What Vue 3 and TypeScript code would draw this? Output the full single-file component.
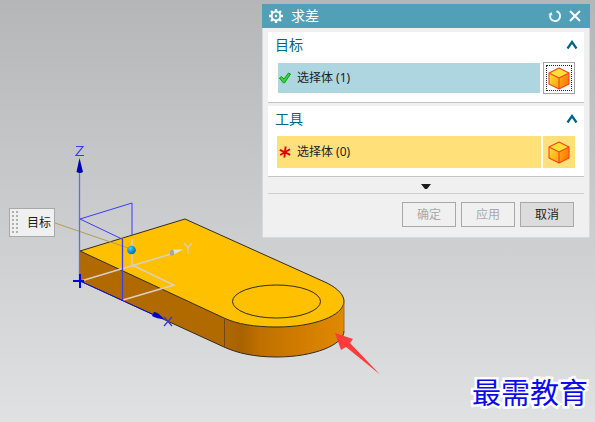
<script setup lang="ts">
import { ref } from 'vue'

interface Step {
  id: string
  title: string
  count: number
  required: boolean
  open: boolean
}

const steps = ref<Step[]>([
  { id: 'target', title: '目标', count: 1, required: false, open: true },
  { id: 'tool', title: '工具', count: 0, required: true, open: true },
])

const grip = Array.from({ length: 12 }, (_, i) => ({ x: (i % 2) * 4, y: Math.floor(i / 2) * 4 }))
</script>

<template>
  <main class="viewport">
    <svg class="scene" width="400" height="400" viewBox="0 0 400 400" aria-hidden="true">
      <defs>
        <linearGradient id="round" gradientUnits="userSpaceOnUse" x1="224" y1="0" x2="344" y2="0">
          <stop offset="0" stop-color="#b06800" />
          <stop offset="0.14" stop-color="#a86200" />
          <stop offset="0.3" stop-color="#bf7000" />
          <stop offset="0.6" stop-color="#cf7b00" />
          <stop offset="1" stop-color="#e08900" />
        </linearGradient>
        <radialGradient id="ball" cx="0.35" cy="0.3" r="0.8">
          <stop offset="0" stop-color="#5cc8ff" />
          <stop offset="0.5" stop-color="#1296dc" />
          <stop offset="1" stop-color="#075d94" />
        </radialGradient>
      </defs>
      <path d="M80 251L224 318V347L80 281Z" fill="#b16a00" />
      <path d="M224 318C237 324 254 327 277 327C313 327 344 316 344 301V331C344 345 313 357 277 357C254 357 237 353 224 347Z" fill="url(#round)" />
      <path d="M80 251L185 219L327 283C339 289 344 296 344 301C344 316 313 327 277 327C254 327 237 324 224 318Z" fill="#ffc000" />
      <g fill="none" stroke="#332b20" stroke-width="1">
        <path d="M80 251L185 219L327 283C339 289 344 296 344 301C344 316 313 327 277 327C254 327 237 324 224 318Z" />
        <path d="M80 281L224 347C237 353 254 357 277 357C313 357 344 345 344 331" />
        <ellipse cx="276.500" cy="301.500" rx="44" ry="16.500" />
        <path d="M224.500 318V347" stroke="#70481f" />
        <path d="M344 302V331" stroke="#a66a20" />
      </g>
      <path d="M55 223L131 249" stroke="#b39b5c" fill="none" />
      <g fill="none" stroke="#d9cfcc" stroke-width="1.400">
        <path d="M81 281L171 254" />
        <path d="M132 239V265L174 285L123 300" />
      </g>
      <g fill="none" stroke="#3c3cf4" stroke-width="1">
        <path d="M79.500 172V281" stroke="#6868ee" stroke-width="1.300" />
        <path d="M132 235V203L80 219L122 239" />
        <path d="M122.500 239V300" stroke-width="1.300" />
        <path d="M80 281L154 315" stroke="#1010dd" />
      </g>
      <path d="M73 281H84M80 274V288" stroke="#0000ef" stroke-width="2" />
      <path d="M79.500 158L83 172Q80 174 76.500 172Z" fill="#0000b4" />
      <path d="M152 316L154 312Q158 312 164 319Q157 319 152 316Z" fill="#0000c8" />
      <path d="M183 249.500L171 249.500Q168 253 171 256Z" fill="#e4e0da" />
      <path d="M171 249.500Q168 253 171 256L174 255Q175 252 173 249.500Z" fill="#aaa59c" />
      <g fill="none" stroke-width="1.200">
        <path d="M76 146.500H83L76 155.500H84" stroke="#3939ff" />
        <path d="M164 317L172 326M172 317L164 326" stroke="#3434d8" />
        <path d="M184 243L188 247.500L192 243M188 247.500V253" stroke="#d8d0c6" />
      </g>
      <circle cx="131.500" cy="250" r="4.300" fill="url(#ball)" />
      <path d="M335 333L353 339L350 343L380 374.500L346 347L341 350Z" fill="#ff3b3b" />
    </svg>

    <div class="tag">
      <svg width="7" height="23" viewBox="0 0 7 23" aria-hidden="true">
        <rect v-for="(dot, i) in grip" :key="i" :x="dot.x" :y="dot.y" width="2" height="2" fill="#b0b0b0" />
      </svg>
      <span>目标</span>
    </div>

    <section class="dialog" role="dialog" aria-labelledby="dialog-title">
      <header class="titlebar">
        <svg width="14" height="14" viewBox="0 0 14 14" aria-hidden="true">
          <path d="M7 0V14M0 7H14M2 2L12 12M12 2L2 12" stroke="#fff" stroke-width="2.400" />
          <circle cx="7" cy="7" r="4.300" fill="#529fb8" stroke="#fff" stroke-width="1.800" />
          <circle cx="7" cy="7" r="1.200" fill="#fff" />
        </svg>
        <h1 id="dialog-title">求差</h1>
        <button type="button" class="tool" aria-label="重置">
          <svg width="14" height="14" viewBox="0 0 14 14">
            <path d="M8.500 2.200A5 5 0 1 1 2.200 6" fill="none" stroke="#e9f5f8" stroke-width="2" />
            <path d="M0.200 5.500L3.500 3L4.500 6.500Z" fill="#e9f5f8" />
          </svg>
        </button>
        <button type="button" class="tool" aria-label="关闭">
          <svg width="14" height="14" viewBox="0 0 14 14">
            <path d="M2 2L12 12M12 2L2 12" stroke="#fff" stroke-width="2" />
          </svg>
        </button>
      </header>

      <div class="body">
        <section v-for="step in steps" :key="step.id" class="group">
          <h2>
            <button type="button" class="toggle" :aria-expanded="step.open" @click="step.open = !step.open">
              <span>{{ step.title }}</span>
              <svg width="12" height="10" viewBox="0 0 12 10" aria-hidden="true">
                <path d="M1.500 8.500L6 2L10.500 8.500" fill="none" stroke="#006487" stroke-width="2.200" />
              </svg>
            </button>
          </h2>
          <div v-if="step.open" class="row" :class="{ required: step.required }">
            <div class="field">
              <svg v-if="step.required" width="12" height="12" viewBox="0 0 12 12" aria-hidden="true">
                <path d="M6.600 0.500L5.400 11.500M0.800 3.800L11.200 8.800M1.200 9L11 3.200" stroke="#e00000" stroke-width="1.900" />
              </svg>
              <svg v-else width="12" height="12" viewBox="0 0 12 12" aria-hidden="true">
                <path d="M0.500 6L2.500 4.500L5 7L9.500 1L11.500 2L5.500 11H4.500Z" fill="#2bdc2b" stroke="#139a1e" />
              </svg>
              <span>选择体 ({{ step.count }})</span>
            </div>
            <button type="button" class="pick" aria-label="选择体">
              <svg width="22" height="24" viewBox="0 -1 22 24">
                <defs>
                  <linearGradient :id="'left-' + step.id" x1="0" y1="0" x2="1" y2="1">
                    <stop offset="0" stop-color="#ffe02c" />
                    <stop offset="1" stop-color="#ff9d12" />
                  </linearGradient>
                  <linearGradient :id="'right-' + step.id" x1="0" y1="0" x2="1" y2="0.500">
                    <stop offset="0" stop-color="#ffb010" />
                    <stop offset="1" stop-color="#ff7800" />
                  </linearGradient>
                </defs>
                <path d="M1 6L11 1L21 6L11 11Z" fill="#ffe135" />
                <path d="M1 6L11 11V22L1 17Z" :fill="`url(#left-${step.id})`" />
                <path d="M21 6L11 11V22L21 17Z" :fill="`url(#right-${step.id})`" />
                <path d="M1 6L11 1L21 6V17L11 22L1 17ZL11 11L21 6M11 11V22" fill="none" stroke="#fb4220" stroke-width="1.100" stroke-linejoin="round" />
              </svg>
            </button>
          </div>
        </section>

        <button type="button" class="more" aria-label="更多">
          <svg width="10" height="5" viewBox="0 0 10 5"><path d="M0 0H10L6 5H4Z" fill="#1c1c1c" /></svg>
        </button>

        <footer class="actions">
          <button type="button" disabled>确定</button>
          <button type="button" disabled>应用</button>
          <button type="button">取消</button>
        </footer>
      </div>
    </section>

    <p class="brand">最需教育</p>
  </main>
</template>

<style>
body {
  margin: 0;
}
</style>

<style scoped>
.viewport {
  position: relative;
  min-height: 100vh;
  overflow: hidden;
  background: linear-gradient(#b5b6b8, #dfe1e3);
  font: 12px/16px "Noto Sans", "Noto Sans CJK SC", sans-serif;
  color: #1c1c1c;
}

button {
  margin: 0;
  padding: 0;
  border: 0;
  background: none;
  font: inherit;
  color: inherit;
}

svg {
  display: block;
  flex: none;
}

h1,
h2,
p {
  margin: 0;
  font-weight: 400;
}

.scene {
  position: absolute;
  top: 0;
  left: 0;
}

.tag {
  position: absolute;
  top: 208px;
  left: 9px;
  display: flex;
  align-items: center;
  gap: 8px;
  box-sizing: border-box;
  height: 29px;
  padding: 0 3px 0 2px;
  border: 1px solid #a8a9ab;
  background: #f0f0f0;
}

.dialog {
  position: absolute;
  top: 4px;
  right: 5px;
  left: 262px;
  background: #f0f0f0;
  box-shadow: inset 0 0 0 1px #d8d9da;
}

.titlebar {
  display: flex;
  align-items: center;
  height: 24px;
  padding: 0 8px 0 7px;
  background: #529fb8;
  color: #fff;
}

.titlebar h1 {
  flex: 1;
  padding-left: 8px;
  font-size: 14px;
  line-height: 24px;
}

.tool + .tool {
  margin-left: 6px;
}

.body {
  padding: 4px 6px 11px;
}

.group {
  margin-bottom: 3px;
  padding-bottom: 8px;
  background: #fff;
  border-bottom: 1px solid #c4c5c6;
}

.toggle {
  display: flex;
  align-items: center;
  justify-content: space-between;
  width: 100%;
  height: 26px;
  padding: 0 6px 0 7px;
  font-size: 14px;
  color: #006487;
}

.row {
  display: flex;
  align-items: center;
  gap: 3px;
  padding: 4px 9px 0 10px;
}

.field {
  flex: 1;
  display: flex;
  align-items: center;
  gap: 6px;
  height: 30px;
  padding-left: 1px;
  background: #aed6e0;
}

.pick {
  display: grid;
  place-items: center;
  box-sizing: border-box;
  width: 32px;
  height: 32px;
  border: 1px solid #a5a5a5;
  outline: 1px dotted #222;
  outline-offset: -4px;
}

.required {
  gap: 2px;
  padding-left: 9px;
}

.required .field {
  height: 32px;
  padding-left: 2px;
  background: #ffe079;
}

.required .pick {
  border: 0;
  outline: 0;
  background: #ffe079;
}

.more {
  display: grid;
  place-items: center;
  width: 100%;
  height: 14px;
  border-bottom: 1px solid #cfcfcf;
}

.actions {
  display: flex;
  justify-content: flex-end;
  gap: 5px;
  padding: 8px 10px 0 0;
}

.actions button {
  box-sizing: border-box;
  width: 54px;
  height: 25px;
  border: 1px solid #a8a8a8;
  background: #dcdcdc;
}

.actions button:disabled {
  background: #f0f0f0;
  color: #a9a9a9;
}

.brand {
  position: absolute;
  right: 7px;
  bottom: 11px;
  font: 29px/40px "Noto Sans CJK SC", sans-serif;
  color: #0a0af0;
  -webkit-text-stroke: 5px #fff;
  paint-order: stroke fill;
}
</style>
